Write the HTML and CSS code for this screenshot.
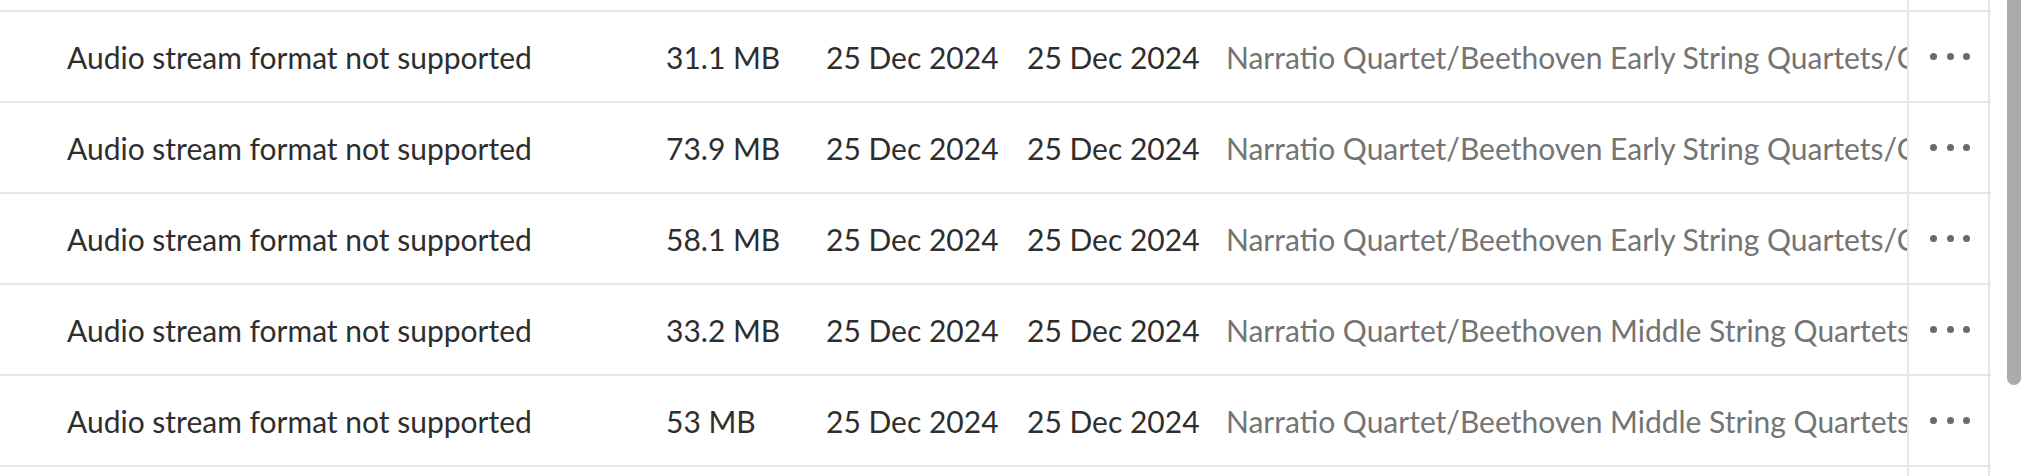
FILE: index.html
```html
<!doctype html>
<html lang="en">
  <head>
    <meta charset="utf-8" />
    <meta name="viewport" content="width=device-width" />
    <title>Library - unsupported files</title>
    <link rel="stylesheet" href="styles.css">
  </head>

  <body>
    <main class="view">
      <section class="tracks">
        <div class="row row-cut">
          <div class="cell name"></div>
          <div class="cell size"></div>
          <div class="cell date"></div>
          <div class="cell date"></div>
          <div class="cell path"></div>
          <div class="cell actions"></div>
        </div>

        <div class="row">
          <div class="cell name">Audio stream format not supported</div>
          <div class="cell size">31.1 MB</div>
          <div class="cell date">25 Dec 2024</div>
          <div class="cell date">25 Dec 2024</div>
          <div class="cell path">Narratio Quartet/Beethoven Early String Quartets/CD 2/01 String Quartet No. 4 in C minor.flac</div>
          <div class="cell actions"><button class="more" aria-label="More"><i></i><i></i><i></i></button></div>
        </div>

        <div class="row">
          <div class="cell name">Audio stream format not supported</div>
          <div class="cell size">73.9 MB</div>
          <div class="cell date">25 Dec 2024</div>
          <div class="cell date">25 Dec 2024</div>
          <div class="cell path">Narratio Quartet/Beethoven Early String Quartets/CD 2/02 String Quartet No. 5 in A major.flac</div>
          <div class="cell actions"><button class="more" aria-label="More"><i></i><i></i><i></i></button></div>
        </div>

        <div class="row">
          <div class="cell name">Audio stream format not supported</div>
          <div class="cell size">58.1 MB</div>
          <div class="cell date">25 Dec 2024</div>
          <div class="cell date">25 Dec 2024</div>
          <div class="cell path">Narratio Quartet/Beethoven Early String Quartets/CD 2/03 String Quartet No. 6 in B-flat major.flac</div>
          <div class="cell actions"><button class="more" aria-label="More"><i></i><i></i><i></i></button></div>
        </div>

        <div class="row">
          <div class="cell name">Audio stream format not supported</div>
          <div class="cell size">33.2 MB</div>
          <div class="cell date">25 Dec 2024</div>
          <div class="cell date">25 Dec 2024</div>
          <div class="cell path">Narratio Quartet/Beethoven Middle String Quartets/CD 1/01 String Quartet No. 7 in F major.flac</div>
          <div class="cell actions"><button class="more" aria-label="More"><i></i><i></i><i></i></button></div>
        </div>

        <div class="row">
          <div class="cell name">Audio stream format not supported</div>
          <div class="cell size">53 MB</div>
          <div class="cell date">25 Dec 2024</div>
          <div class="cell date">25 Dec 2024</div>
          <div class="cell path">Narratio Quartet/Beethoven Middle String Quartets/CD 1/02 String Quartet No. 8 in E minor.flac</div>
          <div class="cell actions"><button class="more" aria-label="More"><i></i><i></i><i></i></button></div>
        </div>

        <div class="row">
          <div class="cell name"></div>
          <div class="cell size"></div>
          <div class="cell date"></div>
          <div class="cell date"></div>
          <div class="cell path"></div>
          <div class="cell actions"></div>
        </div>
      </section>

      <div class="gutter">
        <div class="thumb"></div>
      </div>
    </main>
  </body>
</html>
```

FILE: styles.css
```css
html,
body {
  margin: 0;
  background: #fff;
}

.view {
  display: flex;
  height: 476px;
  overflow: hidden;
  font-family: Lato, "Noto Sans", sans-serif;
  font-size: 30px;
  color: #2e2e2e;
}

.tracks {
  width: 1991px;
  flex: none;
}

.row {
  display: grid;
  grid-template-columns: 651px 160px 201px 199px 698px 81px;
  height: 91px;
  border-bottom: 2px solid #e6e6e6;
  box-sizing: border-box;
}

.row-cut {
  height: 12px;
}

.cell {
  display: flex;
  align-items: center;
  padding: 0 0 0 15px;
  white-space: nowrap;
  overflow: hidden;
}

.cell.name {
  padding-left: 67px;
}

.cell.path {
  color: #747474;
  border-right: 2px solid #e6e6e6;
}

.cell.actions {
  justify-content: center;
  padding-left: 0;
  border-right: 2px solid #e6e6e6;
}

.more {
  display: flex;
  gap: 9.5px;
  padding: 4px;
  margin-left: 3px;
  border: 0;
  background: none;
}

.more i {
  width: 7px;
  height: 7px;
  border-radius: 50%;
  background: #6a6a6a;
}

.gutter {
  flex: 1;
  padding-left: 16px;
}

.thumb {
  width: 14px;
  height: 385px;
  background: #ababab;
  border-radius: 0 0 7px 7px;
}
```
